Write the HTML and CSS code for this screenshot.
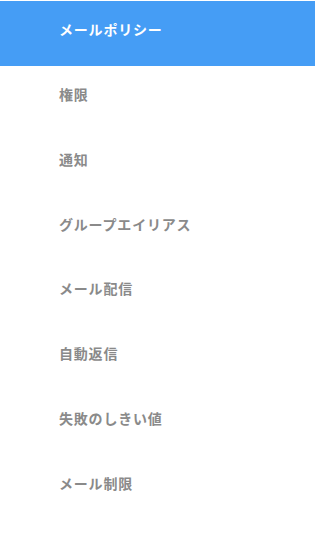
FILE: index.html
```html
<!DOCTYPE html>
<html lang="ja">
<head>
<meta charset="utf-8">
<link rel="stylesheet" href="styles.css">
</head>
<body>
<nav class="menu">
  <a class="item active">メールポリシー</a>
  <a class="item">権限</a>
  <a class="item">通知</a>
  <a class="item">グループエイリアス</a>
  <a class="item">メール配信</a>
  <a class="item">自動返信</a>
  <a class="item">失敗のしきい値</a>
  <a class="item">メール制限</a>
</nav>
</body>
</html>
```
FILE: styles.css
```css
html, body {
  margin: 0;
  padding: 0;
  background: #fff;
}
.menu {
  width: 315px;
  padding-top: 1px;
  display: flex;
  flex-direction: column;
  font-family: "Noto Sans CJK JP", "Noto Sans", sans-serif;
}
.item {
  height: 64.86px;
  display: flex;
  align-items: center;
  padding-left: 59px;
  padding-bottom: 9px;
  font-size: 14px;
  line-height: 20px;
  font-weight: 700;
  letter-spacing: 0.8px;
  color: #8a8a8a;
  text-decoration: none;
  box-sizing: border-box;
}
.item.active {
  background: #459df5;
  color: #fff;
}
```
